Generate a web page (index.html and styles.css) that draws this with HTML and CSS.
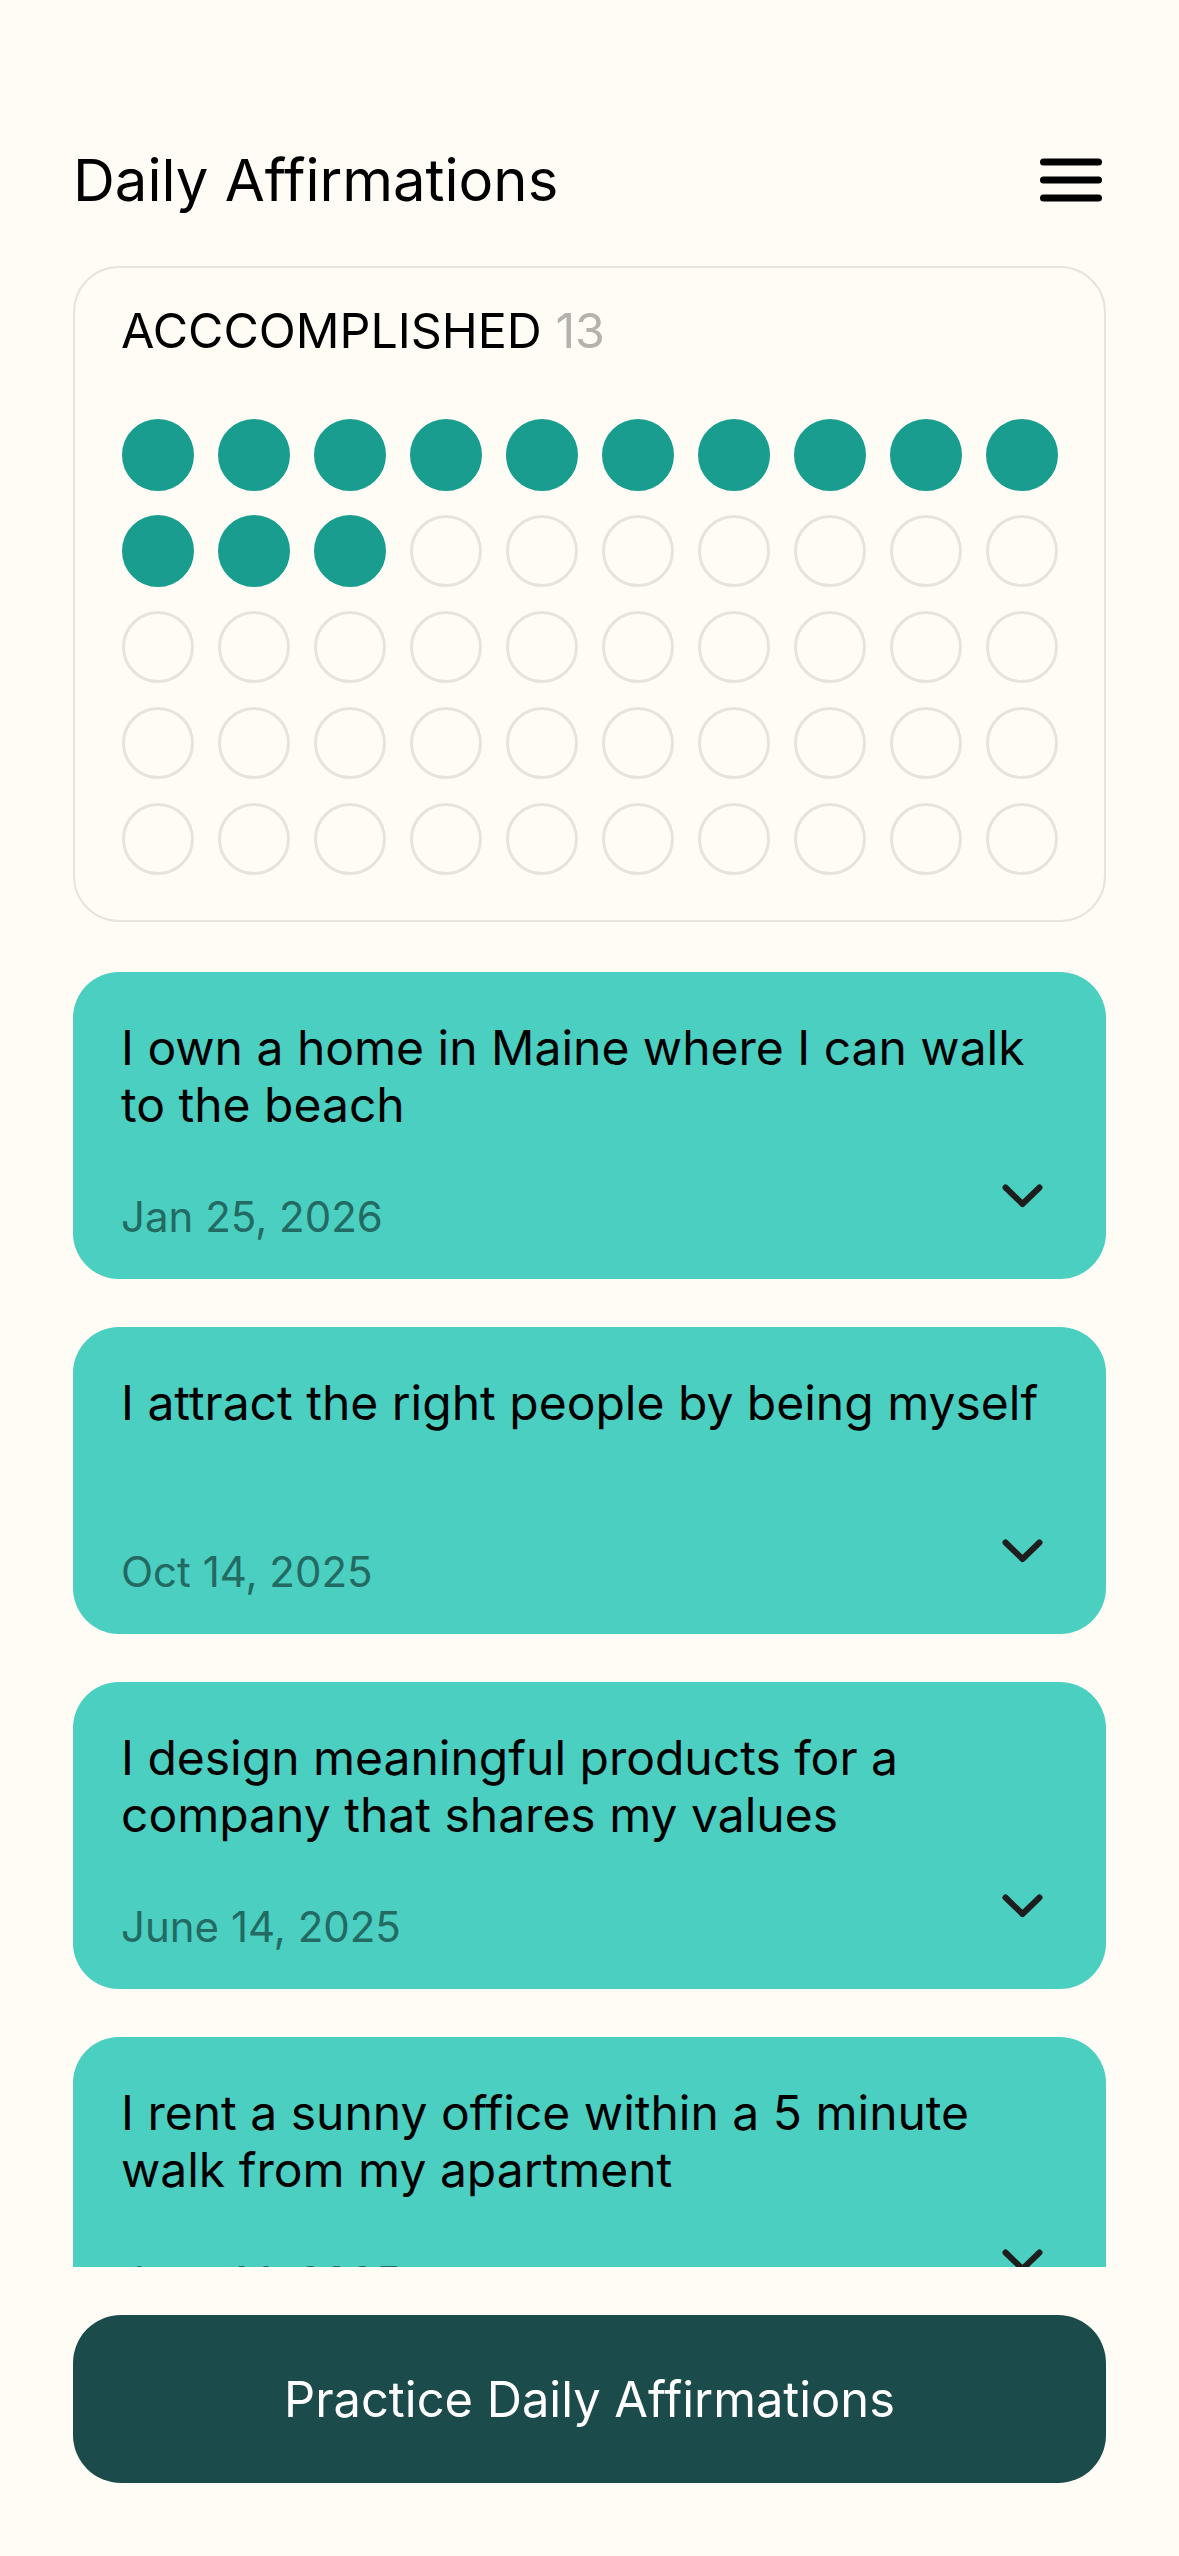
FILE: index.html
```html
<!DOCTYPE html>
<html lang="en">
<head>
<meta charset="utf-8">
<title>Daily Affirmations</title>
<link rel="stylesheet" href="styles.css">
</head>
<body>
<div class="page">
  <header class="header">
    <h1 class="title">Daily Affirmations</h1>
    <svg class="menu" width="66" height="44" viewBox="0 0 66 44" aria-label="Menu">
      <path d="M3.5 4H58.5M3.5 22H58.5M3.5 40H58.5" stroke="#000" stroke-width="7" stroke-linecap="round" fill="none"/>
    </svg>
  </header>

  <main class="scroll">
    <section class="progress">
      <h2 class="progress-title">ACCCOMPLISHED <span class="count">13</span></h2>
      <div class="dots">
        <span class="dot on"></span><span class="dot on"></span><span class="dot on"></span><span class="dot on"></span><span class="dot on"></span><span class="dot on"></span><span class="dot on"></span><span class="dot on"></span><span class="dot on"></span><span class="dot on"></span>
        <span class="dot on"></span><span class="dot on"></span><span class="dot on"></span><span class="dot"></span><span class="dot"></span><span class="dot"></span><span class="dot"></span><span class="dot"></span><span class="dot"></span><span class="dot"></span>
        <span class="dot"></span><span class="dot"></span><span class="dot"></span><span class="dot"></span><span class="dot"></span><span class="dot"></span><span class="dot"></span><span class="dot"></span><span class="dot"></span><span class="dot"></span>
        <span class="dot"></span><span class="dot"></span><span class="dot"></span><span class="dot"></span><span class="dot"></span><span class="dot"></span><span class="dot"></span><span class="dot"></span><span class="dot"></span><span class="dot"></span>
        <span class="dot"></span><span class="dot"></span><span class="dot"></span><span class="dot"></span><span class="dot"></span><span class="dot"></span><span class="dot"></span><span class="dot"></span><span class="dot"></span><span class="dot"></span>
      </div>
    </section>

    <article class="card">
      <p class="card-text">I own a home in Maine where I can walk to the beach</p>
      <div class="card-foot">
        <span class="card-date">Jan 25, 2026</span>
        <svg class="chev" width="41" height="24" viewBox="0 0 41 24"><path d="M3.5 3.5L20.5 20L37.5 3.5" stroke="#1e1e1e" stroke-width="6" stroke-linecap="round" stroke-linejoin="round" fill="none"/></svg>
      </div>
    </article>

    <article class="card">
      <p class="card-text">I attract the right people by being myself</p>
      <div class="card-foot">
        <span class="card-date">Oct 14, 2025</span>
        <svg class="chev" width="41" height="24" viewBox="0 0 41 24"><path d="M3.5 3.5L20.5 20L37.5 3.5" stroke="#1e1e1e" stroke-width="6" stroke-linecap="round" stroke-linejoin="round" fill="none"/></svg>
      </div>
    </article>

    <article class="card">
      <p class="card-text">I design meaningful products for a company that shares my values</p>
      <div class="card-foot">
        <span class="card-date">June 14, 2025</span>
        <svg class="chev" width="41" height="24" viewBox="0 0 41 24"><path d="M3.5 3.5L20.5 20L37.5 3.5" stroke="#1e1e1e" stroke-width="6" stroke-linecap="round" stroke-linejoin="round" fill="none"/></svg>
      </div>
    </article>

    <article class="card">
      <p class="card-text">I rent a sunny office within a 5 minute walk from my apartment</p>
      <div class="card-foot">
        <span class="card-date">June 14, 2025</span>
        <svg class="chev" width="41" height="24" viewBox="0 0 41 24"><path d="M3.5 3.5L20.5 20L37.5 3.5" stroke="#1e1e1e" stroke-width="6" stroke-linecap="round" stroke-linejoin="round" fill="none"/></svg>
      </div>
    </article>
  </main>

  <button class="cta" type="button">Practice Daily Affirmations</button>
</div>
</body>
</html>
```

FILE: styles.css
```css
* { box-sizing: border-box; }

html, body {
  margin: 0;
  padding: 0;
  background: #fffcf5;
}

body {
  font-family: "Inter", "Noto Sans", sans-serif;
  color: #000;
}

.page {
  width: 1179px;
  height: 2556px;
  display: flex;
  flex-direction: column;
  padding: 144px 73px 73px;
}

.header {
  height: 72px;
  display: flex;
  align-items: center;
  justify-content: space-between;
  margin-bottom: 50px;
  flex: none;
}

.title {
  margin: 0;
  font-size: 58px;
  font-weight: 400;
  line-height: 72px;
}

.menu { display: block; }

.scroll {
  flex: 1;
  min-height: 0;
  overflow: hidden;
  display: flex;
  flex-direction: column;
  gap: 48px;
}

.progress {
  flex: none;
  height: 656px;
  border: 2px solid #e7e4de;
  border-radius: 46px;
  padding: 34px 46px 0;
  margin-bottom: 2px;
}

.progress-title {
  margin: 0 0 59px;
  font-size: 48.4px;
  font-weight: 400;
  line-height: 58px;
}

.count { color: #b5b2ac; }

.dots {
  display: grid;
  grid-template-columns: repeat(10, 72px);
  gap: 24px;
  justify-content: center;
}

.dot {
  width: 72px;
  height: 72px;
  border-radius: 50%;
  border: 3px solid #e7e4de;
}

.dot.on {
  background: #189d8f;
  border-color: #189d8f;
}

.card {
  flex: none;
  background: #4acfc1;
  border-radius: 46px;
  padding: 47px 44px 37px 48px;
}

.card-text {
  margin: 0;
  font-size: 48px;
  line-height: 57px;
  min-height: 114px;
}

.card-foot {
  margin-top: 58px;
  margin-right: 4px;
  display: flex;
  justify-content: space-between;
  align-items: flex-start;
}

.card-date {
  font-size: 42px;
  line-height: 51px;
  color: #236a62;
}

.chev {
  display: block;
  margin-top: -7px;
  margin-right: 15px;
}

.cta {
  flex: none;
  margin-top: 48px;
  height: 168px;
  width: 100%;
  border: 0;
  border-radius: 48px;
  background: #1b4b4a;
  color: #fff;
  font-family: "Inter", "Noto Sans", sans-serif;
  font-size: 48.8px;
  font-weight: 400;
}
```
